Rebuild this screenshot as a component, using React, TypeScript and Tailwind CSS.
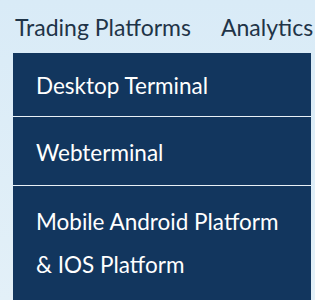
export default function App() {
  return (
    <div
      className="w-[315px] h-[300px] overflow-hidden bg-gradient-to-b from-[#d9ebf7] to-[#e3f0f8] text-[#1f3448]"
      style={{ fontFamily: 'Lato, "Open Sans", sans-serif' }}
    >
      <nav className="flex h-[53px] items-center gap-[30px] pl-[15px] pt-[2px] text-[23px] whitespace-nowrap">
        <span>Trading Platforms</span>
        <span>Analytics</span>
      </nav>
      <div className="ml-[13px] w-[298px] bg-[#12365e] text-white text-[22.5px]">
        <div className="flex h-[64px] items-center border-b border-[#e8f0f6] pl-[23px] pt-[2px]">
          Desktop Terminal
        </div>
        <div className="flex h-[69px] items-center border-b border-[#e8f0f6] pl-[23px] pt-[3px]">
          Webterminal
        </div>
        <div className="pl-[23px] pt-[14px] pb-[20px] leading-[43px] whitespace-nowrap">
          Mobile Android Platform
          <br />& IOS Platform
        </div>
      </div>
    </div>
  )
}
